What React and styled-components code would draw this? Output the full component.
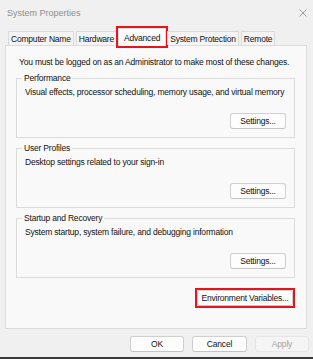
import styled, { createGlobalStyle } from "styled-components";

const GlobalStyle = createGlobalStyle`
  html, body {
    margin: 0;
    background: #3a3a3a;
  }
  body {
    font-family: "Liberation Sans", Arial, sans-serif;
  }
`;

const Window = styled.div`
  width: 313px;
  height: 357px;
  background: #f0f0f0;
  display: flex;
  flex-direction: column;
  color: #111;
  font-size: 8.5px;
  letter-spacing: -0.2px;
`;

const TitleBar = styled.div`
  height: 25px;
  display: flex;
  align-items: center;
  justify-content: space-between;
  padding: 0 6px 0 7px;
`;

const Title = styled.span`
  font-size: 9px;
  letter-spacing: 0;
  color: #8e8e8e;
`;

const Close = styled.svg`
  width: 8px;
  height: 8px;
`;

const TabStrip = styled.div`
  display: flex;
  align-items: flex-end;
  height: 20px;
  padding-left: 7px;
  position: relative;
  z-index: 1;
`;

const Tab = styled.div`
  height: ${p => (p.$active ? "18px" : "14px")};
  padding: 0 ${p => (p.$active ? "5px" : "2px")};
  margin: 0 ${p => (p.$active ? "0" : "1px")};
  margin-bottom: ${p => (p.$active ? "-1px" : "0")};
  display: flex;
  align-items: center;
  background: ${p => (p.$active ? "#fbfbfb" : "#f4f4f4")};
  border: 1px solid #dadada;
  border-bottom: none;
  outline: ${p => (p.$active ? "2px solid #e3151d" : "none")};
  box-sizing: border-box;
  white-space: nowrap;
`;

const Panel = styled.div`
  margin: 0 6px 0 5px;
  height: 284px;
  box-sizing: border-box;
  background: #f9f9f9;
  border: 1px solid #dcdcdc;
  padding: 11px 11px 0 10px;
  display: flex;
  flex-direction: column;
`;

const Notice = styled.div`
  line-height: 11px;
  padding-left: 3px;
  margin-bottom: 5px;
`;

const Group = styled.fieldset`
  margin: 0 0 5px 0;
  padding: 0 8px 8px 8px;
  border: 1px solid #dcdcdc;
  display: flex;
  flex-direction: column;
`;

const Legend = styled.legend`
  padding: 0 2px;
  margin-left: -3px;
  line-height: 10px;
`;

const Desc = styled.div`
  line-height: 10px;
  margin-top: 4px;
`;

const Button = styled.button`
  font: inherit;
  letter-spacing: inherit;
  color: ${p => (p.disabled ? "#a2a2a2" : "#111")};
  height: 16px;
  width: ${p => p.$width || "56px"};
  padding: 0;
  background: ${p => (p.disabled ? "#f5f5f5" : "#fdfdfd")};
  border: 1px solid ${p => (p.disabled ? "#e6e6e6" : "#d0d0d0")};
  border-bottom-color: ${p => (p.disabled ? "#e6e6e6" : "#c4c4c4")};
  border-radius: 3px;
  box-sizing: border-box;
`;

const Highlight = styled.span`
  display: inline-flex;
  padding: 0;
  border: 2px solid #e3151d;
`;

const ButtonRow = styled.div`
  display: flex;
  justify-content: flex-end;
  margin-top: ${p => p.$top || "16px"};
  padding-right: ${p => p.$right || "0"};
`;

const Footer = styled.div`
  display: flex;
  justify-content: flex-end;
  gap: 8px;
  padding: 7px 4px 0 0;
`;

const groups = [
  {
    title: "Performance",
    text: "Visual effects, processor scheduling, memory usage, and virtual memory",
  },
  { title: "User Profiles", text: "Desktop settings related to your sign-in" },
  {
    title: "Startup and Recovery",
    text: "System startup, system failure, and debugging information",
  },
];

const tabs = ["Computer Name", "Hardware", "Advanced", "System Protection", "Remote"];

export default function App() {
  return (
    <>
      <GlobalStyle />
      <Window>
        <TitleBar>
          <Title>System Properties</Title>
          <Close viewBox="0 0 8 8">
            <path d="M0.5 0.5L7.5 7.5M7.5 0.5L0.5 7.5" stroke="#8a8a8a" strokeWidth="0.8" />
          </Close>
        </TitleBar>
        <TabStrip>
          {tabs.map(t => (
            <Tab key={t} $active={t === "Advanced"}>
              {t}
            </Tab>
          ))}
        </TabStrip>
        <Panel>
          <Notice>You must be logged on as an Administrator to make most of these changes.</Notice>
          {groups.map(g => (
            <Group key={g.title}>
              <Legend>{g.title}</Legend>
              <Desc>{g.text}</Desc>
              <ButtonRow>
                <Button>Settings...</Button>
              </ButtonRow>
            </Group>
          ))}
          <ButtonRow $top="5px" $right="0">
            <Highlight>
              <Button $width="96px">Environment Variables...</Button>
            </Highlight>
          </ButtonRow>
        </Panel>
        <Footer>
          <Button $width="54px">OK</Button>
          <Button $width="55px">Cancel</Button>
          <Button $width="54px" disabled>
            Apply
          </Button>
        </Footer>
      </Window>
    </>
  );
}
